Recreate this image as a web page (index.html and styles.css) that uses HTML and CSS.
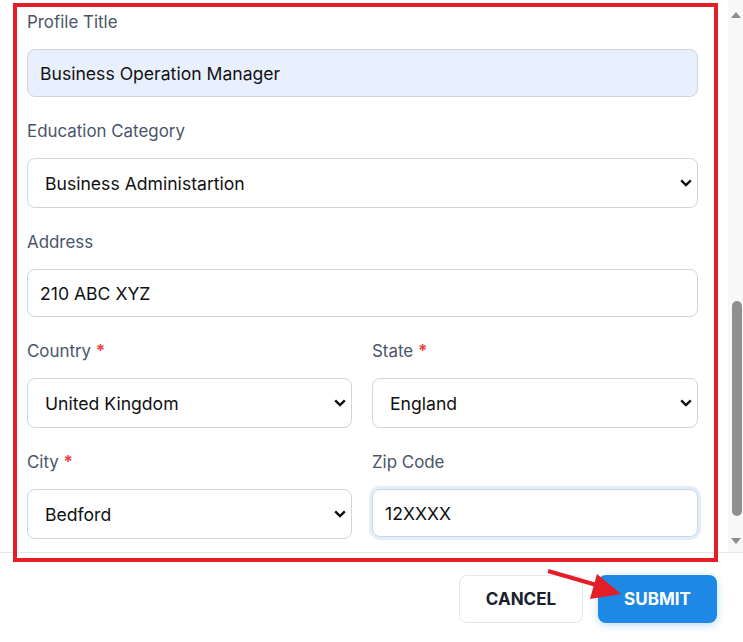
FILE: index.html
```html
<!DOCTYPE html>
<html lang="en">
<head>
    <meta charset="UTF-8">
    <meta name="viewport" content="width=device-width, initial-scale=1.0">
    <title>Edit Profile</title>
    <link rel="stylesheet" href="styles.css">
</head>
<body>
    <div class="modal">
        <div class="modal-body">
            <form class="form-area">
                <div class="field">
                    <label for="profileTitle">Profile Title</label>
                    <input type="text" id="profileTitle" class="autofilled" value="Business Operation Manager">
                </div>

                <div class="field">
                    <label for="education">Education Category</label>
                    <select id="education">
                        <option>Business Administartion</option>
                    </select>
                </div>

                <div class="field">
                    <label for="address">Address</label>
                    <input type="text" id="address" value="210 ABC XYZ">
                </div>

                <div class="row">
                    <div class="field">
                        <label for="country">Country <span class="req">*</span></label>
                        <select id="country">
                            <option>United Kingdom</option>
                        </select>
                    </div>
                    <div class="field">
                        <label for="state">State <span class="req">*</span></label>
                        <select id="state">
                            <option>England</option>
                        </select>
                    </div>
                </div>

                <div class="row">
                    <div class="field">
                        <label for="city">City <span class="req">*</span></label>
                        <select id="city">
                            <option>Bedford</option>
                        </select>
                    </div>
                    <div class="field">
                        <label for="zip">Zip Code</label>
                        <input type="text" id="zip" class="focused" value="12XXXX">
                    </div>
                </div>
            </form>

            <!-- fake scrollbar of the modal body -->
            <div class="scrollbar">
                <span class="arrow up"></span>
                <span class="thumb"></span>
                <span class="arrow down"></span>
            </div>
        </div>

        <div class="modal-footer">
            <button type="button" class="btn btn-cancel">CANCEL</button>
            <button type="button" class="btn btn-submit">SUBMIT</button>
        </div>

        <!-- annotation marks -->
        <div class="mark-box"></div>
        <svg class="mark-arrow" width="743" height="642" viewBox="0 0 743 642">
            <line x1="548" y1="571" x2="600" y2="586" stroke="#e41e26" stroke-width="4"/>
            <polygon points="597,574 590,599 621,594" fill="#e41e26"/>
        </svg>
    </div>
</body>
</html>
```

FILE: styles.css
```css
* {
    box-sizing: border-box;
}
body {
    margin: 0;
    font-family: Inter, "Noto Sans", Arial, sans-serif;
    background-color: #fff;
    color: #111;
}
.modal {
    position: relative;
    width: 743px;
    height: 642px;
    background: #fff;
    overflow: hidden;
}
.modal-body {
    display: flex;
    height: 553px;
    border-bottom: 1px solid #e5e7eb;
}
.form-area {
    flex: 1;
    padding: 10px 30px 0 27px;
}
.field {
    margin-bottom: 22px;
}
.row {
    display: grid;
    grid-template-columns: 325px 326px;
    column-gap: 20px;
}
label {
    display: block;
    font-size: 16.9px;
    line-height: 24px;
    color: #4a5568;
    margin-bottom: 15px;
}
.req {
    color: #ef4444;
    font-weight: bold;
}
input, select {
    display: block;
    width: 100%;
    height: 48px;
    padding: 0 12px;
    font-family: Inter, "Noto Sans", Arial, sans-serif;
    font-size: 17.6px;
    color: #111;
    background: #fff;
    border: 1px solid #d1d5db;
    border-radius: 8px;
    outline: none;
}
select {
    height: 50px;
    padding: 0 24px 0 17px;
    appearance: none;
    -webkit-appearance: none;
    background-image: url("data:image/svg+xml,%3Csvg xmlns='http://www.w3.org/2000/svg' width='12' height='8' viewBox='0 0 12 8'%3E%3Cpath d='M1.2 1.4 L6 6 L10.8 1.4' fill='none' stroke='%23111' stroke-width='2.4'/%3E%3C/svg%3E");
    background-repeat: no-repeat;
    background-position: right 5px center;
    background-size: 12px 8px;
}
input.autofilled {
    background: #e8f0fe;
}
input.focused {
    border-color: #c9d6e8;
    box-shadow: 0 0 0 3px #e4eefb;
}
.scrollbar {
    width: 15px;
    background: #f8f8f8;
    display: flex;
    flex-direction: column;
    align-items: center;
    padding-top: 12px;
}
.arrow {
    width: 0;
    height: 0;
    border-left: 5px solid transparent;
    border-right: 5px solid transparent;
}
.arrow.up {
    border-bottom: 6px solid #8c8c8c;
}
.arrow.down {
    margin-top: 22px;
    border-top: 6px solid #8c8c8c;
}
.thumb {
    display: block;
    width: 10px;
    height: 215px;
    margin-top: 283px;
    margin-left: 3px;
    background: #8f8f8f;
    border-radius: 5px;
}
.modal-footer {
    display: flex;
    justify-content: flex-end;
    gap: 15px;
    padding: 22px 26px 0 0;
}
.btn {
    height: 48px;
    padding: 0 25px;
    font-family: Inter, "Noto Sans", Arial, sans-serif;
    font-size: 17px;
    font-weight: bold;
    border-radius: 8px;
    cursor: pointer;
}
.btn-cancel {
    width: 124px;
    background: #fff;
    color: #1a202c;
    border: 1px solid #e2e8f0;
}
.btn-submit {
    width: 119px;
    background: #1e88e5;
    color: #fff;
    border: none;
    box-shadow: 0 2px 8px rgba(30, 136, 229, 0.3);
}
.mark-box {
    position: absolute;
    left: 13px;
    top: 3px;
    width: 705px;
    height: 559px;
    border: 4px solid #e41e26;
    pointer-events: none;
}
.mark-arrow {
    position: absolute;
    left: 0;
    top: 0;
    pointer-events: none;
}
```
